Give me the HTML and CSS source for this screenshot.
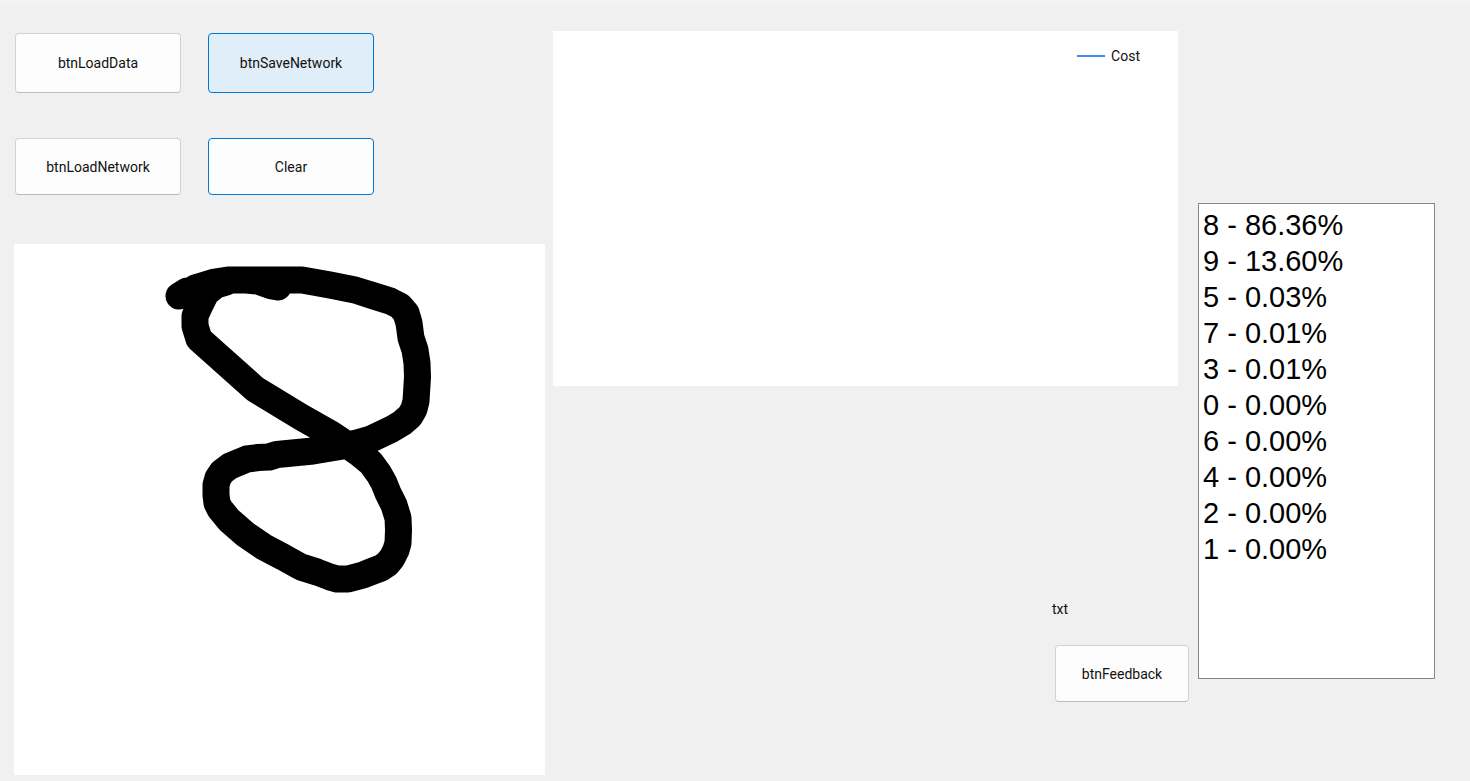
FILE: index.html
```html
<!DOCTYPE html>
<html lang="en">
<head>
<meta charset="utf-8">
<title>Digit recognition</title>
<link rel="stylesheet" href="styles.css">
</head>
<body>
<main class="window">
  <section class="input-panel">
    <div class="actions">
      <button type="button" class="btn btn-high">btnLoadData</button>
      <button type="button" class="btn btn-high btn-outlined btn-hover">btnSaveNetwork</button>
      <button type="button" class="btn">btnLoadNetwork</button>
      <button type="button" class="btn btn-outlined">Clear</button>
    </div>
    <svg class="pad" viewBox="14 244 531 531" role="img" aria-label="Drawn digit">
      <path class="ink" d="M278 287 L272 286 L258 281 L246 280 L231 280 L226 282 L216 285 L206 293 L199 307 L195 316 L195 326 L199 339 L255 389 L301 417 L331 434 L346 444 L360 454 L371 463 L379 474 L384 483 L388 493 L394 505 L398 518 L398.500 530 L398 543 L396 550 L392 558 L387 564 L381 568 L373 571 L363 575 L348 579 L337 579 L330 577 L317 572 L301 567 L283 557 L264 547 L245 534 L229 520 L220 509 L217 503 L216 495 L216 485 L218 478 L222 472 L230 466 L247 459 L258 457.500 L269 457 L277 454.500 L313 451 L343 446 L357 443 L371 439 L392 429 L402 423 L410 416 L414 409 L416 401 L417.500 377 L417 363 L415 350 L411 338 L409 323 L406 313 L400 306 L390 301 L374 296 L355 290 L330 285 L302 280 L228 280 L215 282 L202 286 L195 288 L191 291 L187 291 L179 296"/>
    </svg>
  </section>

  <section class="center-panel">
    <figure class="chart">
      <figcaption class="legend"><span class="legend-line"></span>Cost</figcaption>
    </figure>
    <div class="feedback">
      <label for="feedback">txt</label>
      <button type="button" id="feedback" class="btn btn-feedback">btnFeedback</button>
    </div>
  </section>

  <select class="results" size="13" aria-label="Predictions">
    <option>8 - 86.36%</option>
    <option>9 - 13.60%</option>
    <option>5 - 0.03%</option>
    <option>7 - 0.01%</option>
    <option>3 - 0.01%</option>
    <option>0 - 0.00%</option>
    <option>6 - 0.00%</option>
    <option>4 - 0.00%</option>
    <option>2 - 0.00%</option>
    <option>1 - 0.00%</option>
  </select>
</main>
</body>
</html>
```

FILE: styles.css
```css
* {
  box-sizing: border-box;
}

body {
  margin: 0;
  background: #f0f0f0;
  color: #111;
  font: 14px/20px Roboto, "Liberation Sans", sans-serif;
}

.window {
  display: grid;
  grid-template-columns: 531fr 637fr 237fr;
  align-items: start;
  column-gap: 8px;
  padding: 27px 35px 6px 14px;
  border-top: 4px solid #f3f3f3;
}

.input-panel {
  padding-top: 2px;
}

.actions {
  display: grid;
  grid-template-columns: 166px 166px;
  align-items: start;
  gap: 45px 27px;
  padding-left: 1px;
  margin-bottom: 49px;
}

.btn {
  height: 57px;
  padding: 0 8px;
  border: 1px solid #d2d2d2;
  border-bottom-color: #bcbcbc;
  border-radius: 4px;
  background: #fdfdfd;
  color: inherit;
  font: inherit;
}

.btn-high {
  height: 60px;
}

.btn-outlined {
  border-color: #0078d4;
}

.btn-hover {
  background: #e0eef9;
}

.pad {
  display: block;
  width: 100%;
  background: #fff;
}

.ink {
  fill: none;
  stroke: #000;
  stroke-width: 27;
  stroke-linecap: round;
  stroke-linejoin: round;
}

.chart {
  display: flex;
  justify-content: flex-end;
  align-items: flex-start;
  height: 355px;
  margin: 0 12px 0 0;
  padding: 15px 38px;
  background: #fff;
}

.legend {
  display: flex;
  align-items: center;
  gap: 6px;
}

.legend-line {
  width: 28px;
  height: 2px;
  background: #418cf0;
}

.feedback {
  display: flex;
  flex-direction: column;
  gap: 26px;
  width: 137px;
  margin: 213px 1px 0 auto;
}

.btn-feedback {
  margin: 0 0 0 3px;
}

.results {
  height: 476px;
  margin-top: 172px;
  padding: 4px 2px 2px;
  border: 1px solid #828790;
  border-radius: 0;
  background: #fff;
  color: #000;
  font: 29px "Liberation Sans", Arial, sans-serif;
  overflow: hidden;
}

.results option {
  padding: 1px 2px 2px;
}
```
